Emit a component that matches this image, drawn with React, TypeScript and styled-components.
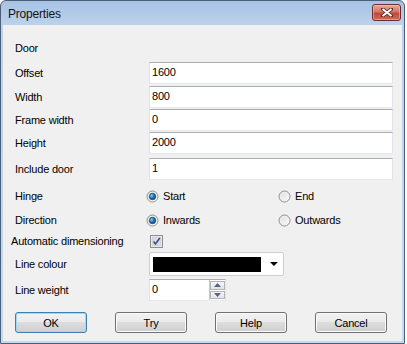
import React from "react";
import styled, { createGlobalStyle } from "styled-components";

const Global = createGlobalStyle`
  html, body { margin: 0; padding: 0; background: #ffffff; }
  body { font-family: "Liberation Sans", Arial, sans-serif; font-size: 11px; letter-spacing: -0.2px; color: #000; }
  #root { width: 407px; height: 344px; }
`;

const Window = styled.div`
  width: 405px;
  height: 344px;
  box-sizing: border-box;
  border: 1px solid #4b5f78;
  border-radius: 6px 6px 0 0;
  background: linear-gradient(#a7c2e3, #bcd2eb 24px, #c6d9ee);
  display: flex;
  flex-direction: column;
  overflow: hidden;
`;

const TitleBar = styled.div`
  height: 24px;
  display: flex;
  align-items: flex-start;
  justify-content: space-between;
  padding: 0 3px 0 7px;
`;

const Title = styled.div`
  margin-top: 6px;
  font-family: "Liberation Sans", Arial, sans-serif;
  font-size: 12px;
  letter-spacing: -0.2px;
  color: #141414;
`;

const CloseButton = styled.div`
  margin-top: 3px;
  width: 29px;
  height: 17px;
  box-sizing: border-box;
  border: 1px solid #6a2c2c;
  border-radius: 3px;
  background: linear-gradient(#e9a897, #d47564 45%, #c04a3a 55%, #cf6a55);
  box-shadow: inset 0 0 0 1px rgba(255, 220, 210, 0.45);
  display: flex;
  align-items: center;
  justify-content: center;
`;

const Client = styled.div`
  flex: 1;
  margin: 0 2px 2px 2px;
  background: #f0f0f0;
  padding: 13px 9px 0 12px;
  display: flex;
  flex-direction: column;
`;

const Row = styled.div<{ $h: number; $mt: number }>`
  height: ${(p) => p.$h}px;
  margin-top: ${(p) => p.$mt}px;
  display: grid;
  grid-template-columns: 134px 1fr;
  align-items: center;
`;

const Label = styled.div<{ $shift?: number }>`
  margin-left: ${(p) => p.$shift ?? 0}px;
  white-space: nowrap;
  line-height: 13px;
`;

const TextBox = styled.input`
  box-sizing: border-box;
  width: 100%;
  height: 22px;
  margin: 0;
  padding: 0 2px 3px 2px;
  border: 1px solid #e2e3ea;
  border-top-color: #abadb3;
  border-bottom-color: #e3e9ef;
  background: #fff;
  font-family: "Liberation Sans", Arial, sans-serif;
  font-size: 11px;
  letter-spacing: -0.2px;
  color: #000;
  outline: none;
`;

const RadioGroup = styled.div`
  margin-left: -3px;
  display: grid;
  grid-template-columns: 132px 1fr;
  align-items: center;
`;

const RadioOption = styled.div`
  display: flex;
  align-items: center;
  gap: 4px;
`;

const CheckWrap = styled.div`
  margin-left: 1px;
  width: 13px;
  height: 13px;
  display: flex;
`;

const Combo = styled.div`
  box-sizing: border-box;
  width: 135px;
  height: 24px;
  border: 1px solid #cdcdcd;
  border-radius: 2px;
  background: #fff;
  display: flex;
  align-items: center;
  padding: 0 5px 0 3px;
  gap: 9px;
`;

const Swatch = styled.div`
  width: 110px;
  height: 15px;
  background: #000;
`;

const SpinBox = styled.div`
  box-sizing: border-box;
  width: 77px;
  height: 22px;
  border: 1px solid #e2e3ea;
  border-top-color: #abadb3;
  border-bottom-color: #e3e9ef;
  background: #fff;
  display: flex;
`;

const SpinText = styled.div`
  flex: 1;
  padding: 3px 0 0 2px;
  line-height: 13px;
`;

const SpinButtons = styled.div`
  width: 16px;
  display: flex;
  flex-direction: column;
  gap: 1px;
  padding: 1px 0;
  box-sizing: border-box;
  border-left: 1px solid #c8c8c8;
`;

const SpinButton = styled.div`
  flex: 1;
  box-sizing: border-box;
  border: 1px solid #b5b5b5;
  background: linear-gradient(#f6f6f6, #e2e2e2);
  display: flex;
  align-items: center;
  justify-content: center;
`;

const ButtonRow = styled.div`
  width: 372px;
  margin-top: 11px;
  height: 21px;
  display: flex;
  justify-content: space-between;
`;

const Button = styled.div<{ $default?: boolean }>`
  box-sizing: border-box;
  width: 72px;
  height: 21px;
  border: 1px solid ${(p) => (p.$default ? "#3c7fb1" : "#707070")};
  border-radius: 3px;
  background: linear-gradient(#f2f2f2, #ebebeb 45%, #dddddd 50%, #cfcfcf);
  box-shadow: inset 0 0 0 1px ${(p) => (p.$default ? "#a6d6f4" : "#fbfbfb")};
  display: flex;
  align-items: center;
  justify-content: center;
  font-size: 11px;
  color: #000;
`;

const Radio = ({ checked }: { checked?: boolean }) => (
  <svg width="13" height="13" viewBox="0 0 13 13">
    <defs>
      <linearGradient id="rbg" x1="0" y1="0" x2="1" y2="1">
        <stop offset="0" stopColor="#d8d8d8" />
        <stop offset="1" stopColor="#ffffff" />
      </linearGradient>
      <radialGradient id="rdot" cx="0.35" cy="0.35" r="0.7">
        <stop offset="0" stopColor="#8fd6fa" />
        <stop offset="0.5" stopColor="#1f7dbf" />
        <stop offset="1" stopColor="#0d4d80" />
      </radialGradient>
    </defs>
    <circle cx="6.5" cy="6.5" r="5.5" fill="url(#rbg)" stroke="#8e8f8f" strokeWidth="1" />
    <circle cx="6.5" cy="6.5" r="4" fill="none" stroke="#f4f4f4" strokeWidth="1" />
    {checked && <circle cx="6.5" cy="6.5" r="3.2" fill="url(#rdot)" stroke="#183c5c" strokeWidth="0.8" />}
  </svg>
);

const CheckBox = () => (
  <svg width="13" height="13" viewBox="0 0 13 13">
    <rect x="0.5" y="0.5" width="12" height="12" fill="#f4f4f4" stroke="#8f8f8f" />
    <rect x="2" y="2" width="9" height="9" fill="#d8dbe2" stroke="#c4c8d2" strokeWidth="0.6" />
    <path d="M3.5 6.5 L5.5 9 L9.8 3" fill="none" stroke="#3d4e8a" strokeWidth="1.6" />
  </svg>
);

const Tri = ({ up }: { up?: boolean }) => (
  <svg width="7" height="4" viewBox="0 0 7 4">
    <path d={up ? "M0 4 L3.5 0 L7 4 Z" : "M0 0 L7 0 L3.5 4 Z"} fill="#4f6592" />
  </svg>
);

const ComboArrow = () => (
  <svg width="8" height="4" viewBox="0 0 8 4">
    <path d="M0 0 L8 0 L4 4 Z" fill="#000" />
  </svg>
);

const CloseX = () => (
  <svg width="12" height="9" viewBox="0 0 12 9">
    <path d="M1 0.5 L11 8.5 M11 0.5 L1 8.5" stroke="#5a2a2a" strokeWidth="3.4" strokeLinecap="square" />
    <path d="M1.5 1 L10.5 8 M10.5 1 L1.5 8" stroke="#ffffff" strokeWidth="2" />
  </svg>
);

const textRows: { label: string; value: string; mt: number }[] = [
  { label: "Offset", value: "1600", mt: 4 },
  { label: "Width", value: "800", mt: 2 },
  { label: "Frame width", value: "0", mt: 1 },
  { label: "Height", value: "2000", mt: 1 },
  { label: "Include door", value: "1", mt: 4 },
];

export default function App() {
  return (
    <>
      <Global />
      <Window>
        <TitleBar>
          <Title>Properties</Title>
          <CloseButton>
            <CloseX />
          </CloseButton>
        </TitleBar>
        <Client>
          <Row $h={20} $mt={0}>
            <Label>Door</Label>
          </Row>
          {textRows.map((r) => (
            <Row key={r.label} $h={22} $mt={r.mt}>
              <Label>{r.label}</Label>
              <TextBox readOnly value={r.value} />
            </Row>
          ))}
          <Row $h={20} $mt={6}>
            <Label>Hinge</Label>
            <RadioGroup>
              <RadioOption>
                <Radio checked />
                <span>Start</span>
              </RadioOption>
              <RadioOption>
                <Radio />
                <span>End</span>
              </RadioOption>
            </RadioGroup>
          </Row>
          <Row $h={20} $mt={4}>
            <Label>Direction</Label>
            <RadioGroup>
              <RadioOption>
                <Radio checked />
                <span>Inwards</span>
              </RadioOption>
              <RadioOption>
                <Radio />
                <span>Outwards</span>
              </RadioOption>
            </RadioGroup>
          </Row>
          <Row $h={14} $mt={4}>
            <Label $shift={-4}>Automatic dimensioning</Label>
            <CheckWrap>
              <CheckBox />
            </CheckWrap>
          </Row>
          <Row $h={24} $mt={4}>
            <Label>Line colour</Label>
            <Combo>
              <Swatch />
              <ComboArrow />
            </Combo>
          </Row>
          <Row $h={22} $mt={3}>
            <Label>Line weight</Label>
            <SpinBox>
              <SpinText>0</SpinText>
              <SpinButtons>
                <SpinButton>
                  <Tri up />
                </SpinButton>
                <SpinButton>
                  <Tri />
                </SpinButton>
              </SpinButtons>
            </SpinBox>
          </Row>
          <ButtonRow>
            <Button $default>OK</Button>
            <Button>Try</Button>
            <Button>Help</Button>
            <Button>Cancel</Button>
          </ButtonRow>
        </Client>
      </Window>
    </>
  );
}
